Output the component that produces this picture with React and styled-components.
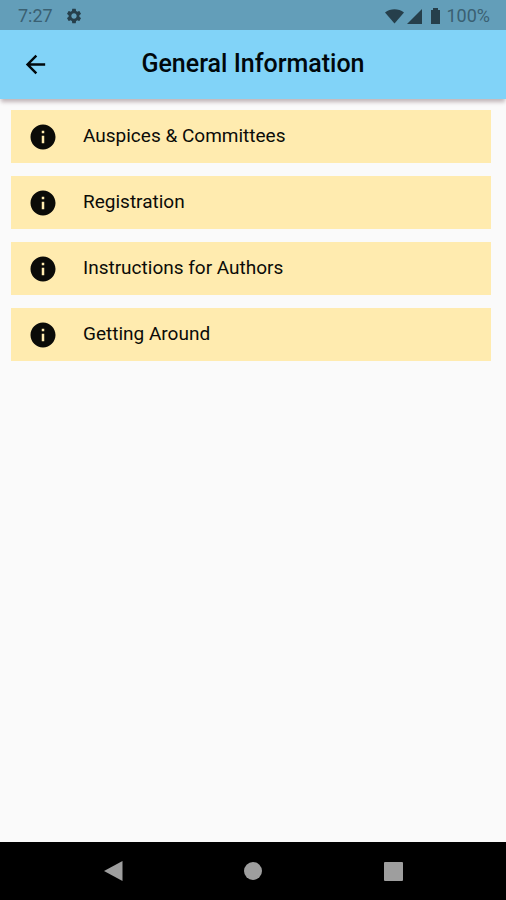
import React from "react";
import styled, { createGlobalStyle } from "styled-components";
import { MdArrowBack, MdInfo, MdSettings } from "react-icons/md";

const GlobalStyle = createGlobalStyle`
  * { box-sizing: border-box; }
  body { margin: 0; background: #fafafa; font-family: Roboto, sans-serif; color: #0b0b08; }
  button { border: 0; padding: 0; background: none; color: inherit; font: inherit; cursor: pointer; }
`;

const Screen = styled.div`
  display: flex;
  flex-direction: column;
  min-height: 100vh;
`;

const StatusBar = styled.div`
  display: flex;
  align-items: center;
  justify-content: space-between;
  height: 30px;
  padding: 2px 16px 0 18px;
  background: #639eb9;
  color: #3a6072;
  font-size: 18px;
  line-height: 20px;
`;

const StatusGroup = styled.div`
  display: flex;
  align-items: center;
  gap: ${({ $gap }) => $gap}px;

  svg { color: #263f4b; }
`;

const AppBar = styled.header`
  display: grid;
  grid-template-columns: 70px 1fr 70px;
  align-items: center;
  height: 69px;
  background: #81d3f8;
  color: #00080c;
  box-shadow: 0 4px 4px -1px rgba(60, 20, 30, 0.3);
  z-index: 1;
`;

const BackButton = styled.button`
  display: flex;
  align-items: center;
  justify-content: center;
  height: 56px;
`;

const Title = styled.h1`
  margin: 0;
  padding-bottom: 2px;
  font-size: 25px;
  line-height: 32px;
  font-weight: 500;
  text-align: center;
  white-space: nowrap;
`;

const List = styled.main`
  display: flex;
  flex-direction: column;
  flex: 1;
  gap: 13px;
  padding: 11px 15px 11px 11px;
`;

const Row = styled.button`
  display: flex;
  align-items: center;
  gap: 25px;
  height: 53px;
  padding: 0 17px;
  background: #ffebaf;
  text-align: left;
`;

const RowLabel = styled.span`
  padding-bottom: 2px;
  font-size: 19px;
  line-height: 24px;
`;

const NavBar = styled.nav`
  display: grid;
  grid-template-columns: repeat(3, 1fr);
  height: 58px;
  padding: 0 8.5%;
  background: #000;
  color: #9e9e9e;
`;

const NavButton = styled.button`
  display: flex;
  align-items: center;
  justify-content: center;
`;

const items = ["Auspices & Committees", "Registration", "Instructions for Authors", "Getting Around"];

export default function App() {
  return (
    <Screen>
      <GlobalStyle />
      <StatusBar>
        <StatusGroup $gap={12}>
          <span>7:27</span>
          <MdSettings size={18} />
        </StatusGroup>
        <StatusGroup $gap={3}>
          <svg width="19" height="15" viewBox="0 0 19 15" aria-hidden="true">
            <path d="M0 3.5C5.5-.8 13.5-.8 19 3.5L9.5 14.5Z" fill="currentColor" />
          </svg>
          <svg width="15" height="15" viewBox="0 0 15 15" aria-hidden="true">
            <path d="M15 0V15H0Z" fill="currentColor" />
          </svg>
          <svg width="18" height="16" viewBox="0 0 18 16" aria-hidden="true">
            <path d="M8 0H13V2H15V16H6V2H8Z" fill="currentColor" />
          </svg>
          <span>100%</span>
        </StatusGroup>
      </StatusBar>
      <AppBar>
        <BackButton aria-label="Back">
          <MdArrowBack size={29} />
        </BackButton>
        <Title>General Information</Title>
      </AppBar>
      <List>
        {items.map((item) => (
          <Row key={item}>
            <MdInfo size={30} />
            <RowLabel>{item}</RowLabel>
          </Row>
        ))}
      </List>
      <NavBar>
        <NavButton aria-label="Back">
          <svg width="19" height="22" viewBox="0 0 19 22" aria-hidden="true">
            <path d="M18.5 1V21L0 11Z" fill="currentColor" />
          </svg>
        </NavButton>
        <NavButton aria-label="Home">
          <svg width="18" height="18" viewBox="0 0 18 18" aria-hidden="true">
            <circle cx="9" cy="9" r="9" fill="currentColor" />
          </svg>
        </NavButton>
        <NavButton aria-label="Overview">
          <svg width="19" height="19" viewBox="0 0 19 19" aria-hidden="true">
            <rect width="19" height="19" rx="1" fill="currentColor" />
          </svg>
        </NavButton>
      </NavBar>
    </Screen>
  );
}
